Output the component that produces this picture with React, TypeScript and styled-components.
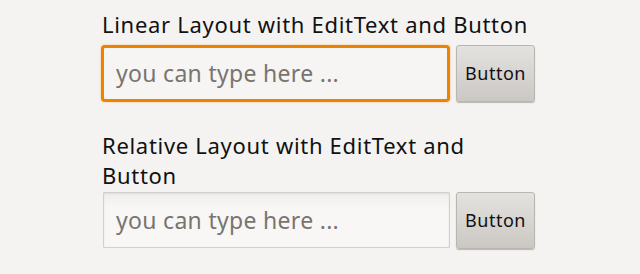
import React from "react";
import styled, { createGlobalStyle } from "styled-components";

const GlobalStyle = createGlobalStyle`
  html, body {
    margin: 0;
    padding: 0;
    background: #f4f3f1;
  }
  body {
    font-family: "Noto Sans", "Open Sans", sans-serif;
  }
`;

const Screen = styled.div`
  width: 640px;
  height: 274px;
  box-sizing: border-box;
  padding: 9px 0 0 101px;
  background: #f4f3f1;
  overflow: hidden;
`;

const Column = styled.div`
  width: 434px;
  display: flex;
  flex-direction: column;
`;

const Section = styled.div<{ $spaced?: boolean }>`
  display: flex;
  flex-direction: column;
  margin-top: ${({ $spaced }) => ($spaced ? "28px" : "0")};
`;

const Title = styled.div<{ $gap: number }>`
  font-size: 22px;
  letter-spacing: 0.7px;
  line-height: 30.5px;
  color: #111;
  padding-left: 1px;
  margin-bottom: ${({ $gap }) => $gap}px;
`;

const Row = styled.div`
  display: flex;
  align-items: center;
  gap: 6px;
`;

const EditText = styled.input<{ $focused?: boolean }>`
  flex: 1;
  min-width: 0;
  box-sizing: border-box;
  height: ${({ $focused }) => ($focused ? "57px" : "56px")};
  margin-left: ${({ $focused }) => ($focused ? "0" : "2px")};
  padding: 0 12px;
  font-family: inherit;
  font-size: 23px;
  letter-spacing: 0.3px;
  color: #333;
  outline: none;
  border-radius: ${({ $focused }) => ($focused ? "4px" : "1px")};
  border: ${({ $focused }) => ($focused ? "3px solid #ef8300" : "1px solid #d3d0cc")};
  background: ${({ $focused }) =>
    $focused ? "#f6f5f3" : "linear-gradient(#f0efed, #f8f7f5 30%)"};
  box-shadow: ${({ $focused }) =>
    $focused ? "0 0 2px rgba(239, 131, 0, 0.5)" : "inset 0 1px 2px rgba(0,0,0,0.08)"};

  &::placeholder {
    color: #787470;
  }
`;

const Button = styled.button`
  width: 79px;
  height: 57px;
  box-sizing: border-box;
  font-family: inherit;
  font-size: 18px;
  letter-spacing: 0.5px;
  color: #111;
  border: 1px solid #b9b6b1;
  border-radius: 3px;
  background: linear-gradient(#e4e2df, #cbc8c4);
  box-shadow: 0 1px 1px rgba(0, 0, 0, 0.25);
  padding: 0;
`;

export default function App() {
  return (
    <>
      <GlobalStyle />
      <Screen>
        <Column>
          <Section>
            <Title $gap={5}>Linear Layout with EditText and Button</Title>
            <Row>
              <EditText $focused placeholder="you can type here ..." />
              <Button>Button</Button>
            </Row>
          </Section>
          <Section $spaced>
            <Title $gap={1}>Relative Layout with EditText and Button</Title>
            <Row>
              <EditText placeholder="you can type here ..." />
              <Button>Button</Button>
            </Row>
          </Section>
        </Column>
      </Screen>
    </>
  );
}
